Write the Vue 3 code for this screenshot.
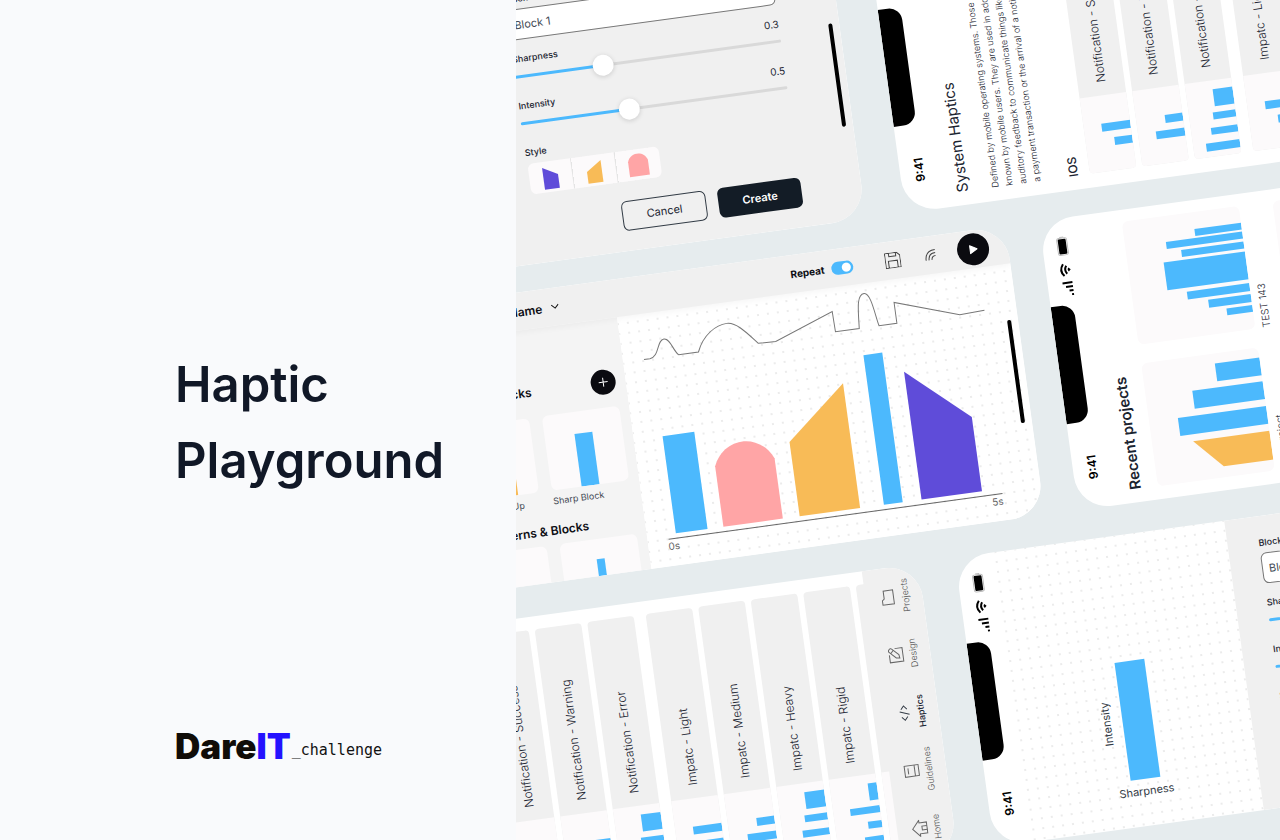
<script setup>
const ios = [
  { name: 'Notification - Success', bars: [[25, 8, 18], [40, 8, 29]] },
  { name: 'Notification - Warning', bars: [[25, 8, 29], [40, 8, 18]] },
  { name: 'Notification - Error', bars: [[6, 8, 34], [22, 7, 27], [37, 7, 23], [50, 17, 20]] },
]
const impact = [
  { name: 'Impatc - Light', bars: [[25, 8, 18], [40, 8, 29]] },
  { name: 'Impatc - Medium', bars: [[25, 8, 29], [40, 8, 18]] },
  { name: 'Impatc - Heavy', bars: [[6, 8, 34], [22, 7, 27], [37, 7, 23], [50, 17, 20]] },
  { name: 'Impatc - Rigid', bars: [[6, 8, 19], [22, 7, 14], [37, 7, 30], [50, 17, 9]] },
  { name: 'Impatc - Soft', bars: [[6, 8, 18]] },
]
const groups = [ios, impact]

const tabs = [
  { name: 'Home', paths: ['M.500 8.500 8.500 1.500l8 7H14V16H3V8.500z', 'M6.500 16v-5h4v5'] },
  { name: 'Guidelines', paths: ['M3 1.500h11v14H3z', 'M3 11.500h11', 'M5.500 5h6'] },
  { name: 'Haptics', active: true, paths: ['M5 6 1.500 9 5 12', 'M12.500 6 16 9l-3.500 3', 'M10.500 4.500 7 14'] },
  { name: 'Design', paths: ['M9 2H1.500v13.500H15V8', 'M5 12l.500-3.500L12 2C13.500.500 16.500 3.500 15 5L8.500 11.500z', 'M10.500 3.500l3 3'] },
  { name: 'Projects', paths: ['M1.500 2.500h4.500l1.500 2h8v9.500h-14z'] },
]

const blockBars = [[47, 18, 89], [72, 18, 71], [96, 18, 45]]
const testBars = [[17, 7, 26], [27, 8, 43], [38, 8, 63], [50, 28, 82], [81, 7, 63], [91, 7, 77], [100, 7, 47]]

const sliders = [
  { name: 'Sharpness', shown: '0.3', value: 0.32 },
  { name: 'Intensity', shown: '0.5', value: 0.4 },
]
const shapes = [
  { name: 'Falling', color: '#5f4cd9', d: 'M14 5 29 13V27H14z' },
  { name: 'Rising', color: '#f8bb57', d: 'M14 15 29 5V27H14z' },
  { name: 'Dome', color: '#ffa5a6', d: 'M12 11C15 1 29 1 32 11V26H12z' },
]
const blockPhones = ['top', 'bottom']
const hapticPhones = ['upper', 'lower']
</script>

<template>
  <main class="page">
    <section class="intro">
      <h1 class="title">Haptic<br />Playground</h1>
      <div class="brand"><span class="brand-name">Dare<b>IT</b></span><span class="brand-sub">_challenge</span></div>
    </section>

    <section class="art">
      <div class="scene">
        <!-- block settings -->
        <article v-for="id in blockPhones" :key="id" class="phone wide block-phone" :class="id">
          <div class="preview dots">
            <svg viewBox="0 0 272 292" aria-hidden="true">
              <rect x="144" y="126" width="30" height="119" fill="#4cb9fd" />
              <text x="131" y="261" class="preview-text">Sharpness</text>
              <text transform="translate(132 208) rotate(-90)" class="preview-text">Intensity</text>
            </svg>
          </div>
          <div class="status side">
            <span class="clock">9:41</span><span class="notch"></span>
            <svg class="signals" viewBox="0 0 60 12" aria-hidden="true">
              <path d="M0 9h2v2H0zM4 7h2v4H4zM8 4h2v7H8zM12 1h2v10h-2z" />
              <g fill="none" stroke="#000" stroke-width="2"><path d="M20 4q6-5 12 0" /><path d="M22 7q4-3 8 0" /></g>
              <path d="M24 9q2-2 4 0l-2 2z" />
              <rect x="41" y="1" width="17" height="10" rx="2" fill="none" stroke="#bbb" /><rect x="42" y="2" width="15" height="8" rx="1" /><path d="M59 4v4" stroke="#bbb" />
            </svg>
          </div>
          <form class="settings" @submit.prevent>
            <label class="field-label" :for="id + '-name'">Block Name</label>
            <input :id="id + '-name'" class="field" type="text" value="Block 1" />
            <div v-for="s in sliders" :key="s.name" class="slider">
              <div class="slider-head">
                <label :for="id + s.name">{{ s.name }}</label><output>{{ s.shown }}</output>
              </div>
              <input :id="id + s.name" type="range" min="0" max="1" step="0.01" :value="s.value" :style="{ '--fill': s.value * 100 + '%' }" />
            </div>
            <span class="field-label style-label">Style</span>
            <div class="styles">
              <button v-for="s in shapes" :key="s.name" type="button" :aria-label="s.name">
                <svg viewBox="0 0 44 30"><path :d="s.d" :fill="s.color" /></svg>
              </button>
            </div>
            <div class="actions">
              <button type="button" class="cancel">Cancel</button>
              <button type="submit" class="create">Create</button>
            </div>
          </form>
          <span class="home-bar"></span>
        </article>

        <!-- editor -->
        <article class="phone wide editor">
          <header class="bar">
            <button class="project" type="button">
              <span>Project Name</span>
              <svg width="8" height="6" viewBox="0 0 8 6"><path d="M.500 1 4 4.500 7.500 1" fill="none" stroke="#111" /></svg>
            </button>
            <label class="repeat">Repeat<input type="checkbox" checked /></label>
            <button class="icon save" type="button" aria-label="Save">
              <svg width="16" height="16" viewBox="0 0 16 16"><path d="M.500.500h12l3 3v12H.500zM4.500.500v3.500h7V.500M3.500 15.500v-7h9v7" /></svg>
            </button>
            <button class="icon feel" type="button" aria-label="Haptics">
              <svg width="12" height="14" viewBox="0 0 12 14"><path d="M1 12Q1 2 11 2M4 12Q4 5 11 5M7 12Q7 8 11 8" /></svg>
            </button>
            <button class="play" type="button" aria-label="Play">
              <svg width="32" height="32" viewBox="0 0 32 32"><path d="M13 12v8l7-4z" fill="#fff" stroke="#fff" stroke-linejoin="round" /></svg>
            </button>
          </header>
          <aside class="library">
            <div class="lib-head">
              <h3>Simple Blocks</h3>
              <button type="button" class="add" aria-label="Add block">
                <svg width="25" height="25" viewBox="0 0 25 25"><path d="M12.500 8v9M8 12.500h9" stroke="#fff" /></svg>
              </button>
            </div>
            <div class="cards">
              <figure>
                <svg viewBox="0 0 78 75"><path d="M22 75V50L57 25V75z" fill="#f8bb57" /></svg>
                <figcaption>Slow Ramp Up</figcaption>
              </figure>
              <figure>
                <svg viewBox="0 0 78 75"><path d="M30 22h18v53H30z" fill="#4cb9fd" /></svg>
                <figcaption>Sharp Block</figcaption>
              </figure>
            </div>
            <h3 class="mine">My Patterns &amp; Blocks</h3>
            <div class="cards">
              <figure><svg viewBox="0 0 78 75"></svg></figure>
              <figure><svg viewBox="0 0 78 75"><path d="M35 20h8v55h-8z" fill="#4cb9fd" /></svg></figure>
            </div>
          </aside>
          <div class="stage dots">
            <svg viewBox="235 38 397 254" aria-hidden="true">
              <path fill="none" stroke="#777" d="M256 83.500L262 83.500C272 83 271 66 278.500 66C285 66 286 79 291 83.500L311 83.500C318 67 332 59 343 59C353 59 363 73 371.500 83L389 83.500L449 61.500L449.500 82L473.500 82C475 64 475 48 483 48C490 48 491 72 493.500 82L511.500 82L511.500 61L575 82L600 81" />
              <path d="M264 162h32v98h-32zM474 109h19v151h-19z" fill="#4cb9fd" />
              <path d="M312 260V199C324 171 360 171 372 199V260z" fill="#ffa5a6" />
              <path d="M389 260V185L450 134V260z" fill="#f8bb57" />
              <path d="M512 260V131L573 185V260z" fill="#5f4cd9" />
              <path d="M256 265H593" stroke="#666" />
              <text x="255" y="276">0s</text><text x="593" y="276" text-anchor="end">5s</text>
            </svg>
          </div>
          <span class="home-bar"></span>
        </article>

        <!-- system haptics -->
        <article v-for="id in hapticPhones" :key="id" class="phone tall haptics" :class="id">
          <div class="status">
            <span class="clock">9:41</span><span class="notch"></span>
          </div>
          <h2>System Haptics</h2>
          <p class="about">Defined by mobile operating systems. Those patterns are<br />known by mobile users. They are used in addition to visual<br />auditory feedback to communicate things like completing<br />a payment transaction or the arrival of a notification.</p>
          <h3 class="os">IOS</h3>
          <ul v-for="(g, i) in groups" :key="i" class="rows">
            <li v-for="r in g" :key="r.name">
              <svg viewBox="0 0 76 47" aria-hidden="true">
                <rect v-for="b in r.bars" :key="b[0]" :x="b[0]" :y="47 - b[2]" :width="b[1]" :height="b[2]" fill="#4cb9fd" />
              </svg>
              <span>{{ r.name }}</span>
            </li>
          </ul>
          <nav class="tabs">
            <a v-for="t in tabs" :key="t.name" href="#" :class="{ active: t.active }">
              <svg width="17" height="17" viewBox="0 0 17 17"><path v-for="p in t.paths" :key="p" :d="p" /></svg>
              {{ t.name }}
            </a>
          </nav>
        </article>

        <!-- recent projects -->
        <article class="phone tall recent">
          <div class="status">
            <span class="clock">9:41</span><span class="notch"></span>
            <svg class="signals" viewBox="0 0 60 12" aria-hidden="true">
              <path d="M0 9h2v2H0zM4 7h2v4H4zM8 4h2v7H8zM12 1h2v10h-2z" />
              <g fill="none" stroke="#000" stroke-width="2"><path d="M20 4q6-5 12 0" /><path d="M22 7q4-3 8 0" /></g>
              <path d="M24 9q2-2 4 0l-2 2z" />
              <rect x="41" y="1" width="17" height="10" rx="2" fill="none" stroke="#bbb" /><rect x="42" y="2" width="15" height="8" rx="1" /><path d="M59 4v4" stroke="#bbb" />
            </svg>
          </div>
          <h2 class="strong">Recent projects</h2>
          <div class="projects">
            <figure>
              <svg viewBox="0 0 124 118">
                <path d="M11 118V68L40 41V118z" fill="#f8bb57" />
                <rect v-for="b in blockBars" :key="b[0]" :x="b[0]" :y="118 - b[2]" :width="b[1]" :height="b[2]" fill="#4cb9fd" />
              </svg>
              <figcaption>First project</figcaption>
            </figure>
            <figure>
              <svg viewBox="0 0 124 118">
                <rect v-for="b in testBars" :key="b[0]" :x="b[0]" :y="118 - b[2]" :width="b[1]" :height="b[2]" fill="#4cb9fd" />
              </svg>
              <figcaption>TEST 143</figcaption>
            </figure>
            <figure><svg viewBox="0 0 124 118"></svg></figure>
            <figure><svg viewBox="0 0 124 118"></svg></figure>
          </div>
        </article>
      </div>
    </section>
  </main>
</template>

<style>
body { margin: 0; }
</style>

<style scoped>
* { box-sizing: border-box; margin: 0; padding: 0; }
svg { display: block; }
button, input { font: inherit; color: inherit; border: 0; background: none; }
.page { display: grid; grid-template-columns: 516px 1fr; min-height: 100vh; background: #f9fafc; font-family: Inter, "Liberation Sans", sans-serif; color: #1b2430; }
.intro { display: grid; grid-template-rows: 1fr auto 1fr; padding: 0 24px 70px 175px; }
.title { grid-row: 2; padding-top: 76px; font-size: 49px; line-height: 76px; font-weight: 600; color: #111827; }
.brand { grid-row: 3; align-self: end; display: flex; align-items: center; line-height: 40px; }
.brand-name { font-size: 35px; font-weight: 900; color: #100c08; }
.brand-name b { font-weight: 900; color: #2412ff; }
.brand-sub { padding: 8px 0 0 1px; font-family: "DejaVu Sans Mono", monospace; font-size: 15px; color: #111; }

.art { position: relative; overflow: hidden; background: #e6ecee; }
.scene { position: absolute; left: 0; top: 0; width: 100%; height: 100%; transform: rotate(-7.8deg); transform-origin: 0 0; }
.phone { position: absolute; overflow: hidden; background: #fff; border-radius: 34px; }
.wide { width: 632px; height: 292px; }
.tall { width: 292px; height: 630px; transform: rotate(-90deg); transform-origin: 0 0; }
.block-phone.top { left: -315px; top: -28px; }
.block-phone.bottom { left: 359px; top: 612px; }
.editor { left: -178px; top: 290px; }
.haptics.upper { left: 357px; top: 264px; }
.haptics.lower { left: -308px; top: 905px; }
.recent { left: 488px; top: 582px; }
.dots { background-image: radial-gradient(circle, #dcdcdc 0, rgba(236, 236, 236, 0.7) 1px, transparent 1px); background-size: 10px 10px; }
.home-bar { position: absolute; right: 7px; top: 94px; width: 4px; height: 104px; border-radius: 2px; background: #000; }

.status { display: grid; grid-template-columns: 87px 118px 87px; height: 50px; width: 292px; color: #000; }
.status.side { position: absolute; left: 0; top: 292px; height: 36px; transform: rotate(-90deg); transform-origin: 0 0; }
.clock { padding: 11px 0 0 29px; font-size: 12px; line-height: 18px; font-weight: 600; }
.notch { height: 23px; background: #000; border-radius: 0 0 13px 13px; }
.signals { width: 60px; height: 12px; margin: 14px 0 0 9px; }

.block-phone { display: grid; grid-template-columns: 272px 1fr; }
.preview { background-position: 36px 5px; background-clip: content-box; padding-left: 36px; }
.preview svg { width: 272px; height: 292px; margin-left: -36px; }
.preview-text { font-size: 11px; fill: #333b46; }
.settings { display: flex; flex-direction: column; padding: 21px 60px 0 31px; background: #f0f0f0; }
.field-label { font-size: 9px; line-height: 12px; font-weight: 500; }
.field { height: 31px; margin: 4px 0 13px; padding: 0 6px; border: 1px solid #777; border-radius: 6px; background: #fff; font-size: 11px; color: #444b55; }
.slider { margin-bottom: 14px; }
.slider-head { display: flex; justify-content: space-between; height: 13px; font-size: 9px; line-height: 12px; font-weight: 500; }
.slider-head output { font-size: 10px; font-weight: 400; }
input[type="range"] { display: block; width: 100%; height: 20px; appearance: none; }
input[type="range"]::-webkit-slider-runnable-track { height: 3px; border-radius: 2px; background: linear-gradient(90deg, #4cb9fd var(--fill), #d9d9d9 var(--fill)); }
input[type="range"]::-webkit-slider-thumb { appearance: none; width: 21px; height: 21px; margin-top: -9px; border-radius: 50%; background: #fff; box-shadow: 0 1px 5px rgba(0, 0, 0, 0.16); }
.style-label { margin-bottom: 5px; }
.styles { display: flex; align-self: flex-start; margin: 0 0 19px 1px; border-radius: 6px; overflow: hidden; background: #fcfafb; }
.styles button { width: 44px; height: 31px; }
.styles button + button { box-shadow: -1px 0 #e4e4e4; }
.actions { display: flex; justify-content: flex-end; gap: 12px; }
.actions button { height: 30px; border-radius: 6px; font-size: 11px; }
.actions .cancel { width: 85px; border: 1px solid #333c46; font-weight: 400; }
.actions .create { width: 84px; background: #131c26; color: #fff; font-weight: 600; }

.editor { display: grid; grid-template: 38px 1fr / 235px 1fr; }
.bar { grid-column: 1 / 3; position: relative; z-index: 1; display: flex; align-items: center; padding: 0 19px 0 56px; background: #f0f0f0; box-shadow: 0 2px 6px rgba(0, 0, 0, 0.04); color: #0d0e14; }
.project { display: flex; align-items: center; gap: 9px; margin-right: auto; font-size: 12px; font-weight: 600; }
.project span { width: 106px; text-align: right; }
.repeat { display: flex; align-items: center; gap: 7px; font-size: 10px; font-weight: 700; }
.repeat input { appearance: none; width: 22px; height: 13px; border-radius: 7px; background: radial-gradient(circle at 15px 50%, #fff 4px, #4cb9fd 5px); }
.icon path { fill: none; stroke: #444; }
.save { margin-left: 32px; }
.feel { margin: 0 21px 0 24px; }
.play { width: 32px; height: 32px; border-radius: 50%; background: #0b0b10; }
.library { padding: 50px 10px 0 56px; background: #f4f4f4; color: #0d0e14; overflow: hidden; }
.lib-head { display: flex; justify-content: space-between; align-items: center; margin-bottom: 13px; }
.library h3 { min-width: 84px; text-align: right; font-size: 12px; line-height: 18px; font-weight: 600; white-space: nowrap; }
.library h3.mine { width: 123px; margin: 13px 0 5px; }
.add { width: 25px; height: 25px; border-radius: 50%; background: #0b0b10; }
.cards { display: grid; grid-template-columns: 78px 78px; gap: 13px; }
.cards svg { background: #fcfafb; border-radius: 6px; width: 78px; height: 75px; }
.cards figcaption { margin-top: 4px; font-size: 9px; line-height: 14px; color: #444b55; white-space: nowrap; }
.stage { background-color: #fff; background-position: 5px 2px; }
.stage svg { width: 397px; height: 254px; }
.stage text { font-size: 10px; fill: #666; }

.tall h2 { padding-left: 13px; font-size: 15px; line-height: 20px; font-weight: 400; color: #1b2430; }
.tall h2.strong { font-weight: 600; }
.about { margin: 16px 0 21px 13px; font-size: 9px; line-height: 14px; font-weight: 300; white-space: nowrap; color: #1b2430; }
.os { margin: 0 0 7px 13px; font-size: 12px; line-height: 18px; font-weight: 500; }
.rows { display: grid; gap: 6px; margin: 0 13px 12px 14px; list-style: none; }
.rows li { display: flex; height: 47px; border-radius: 4px; overflow: hidden; background: #f0f0f0; font-size: 12px; line-height: 47px; font-weight: 300; color: #1b2430; }
.rows svg { width: 76px; height: 47px; margin-right: 13px; background: #fcfafb; }
.tabs { position: absolute; left: 0; right: 0; bottom: 0; height: 57px; display: grid; grid-template-columns: repeat(5, 1fr); background: #f0f0f0; }
.tabs a { display: flex; flex-direction: column; align-items: center; gap: 3px; padding-top: 14px; font-size: 9px; line-height: 12px; font-weight: 300; color: #555; text-decoration: none; }
.tabs a.active { color: #1b2430; font-weight: 500; }
.tabs path { fill: none; stroke: #666; }
.tabs a.active path { stroke: #333b46; }

.projects { display: grid; grid-template-columns: 124px 124px; gap: 15px 19px; margin: 12px 0 0 13px; }
.projects svg { width: 124px; height: 118px; border-radius: 6px; background: #fcfafb; }
.projects figcaption { margin-top: 3px; font-size: 10px; line-height: 16px; font-weight: 300; color: #1b2430; }
</style>
